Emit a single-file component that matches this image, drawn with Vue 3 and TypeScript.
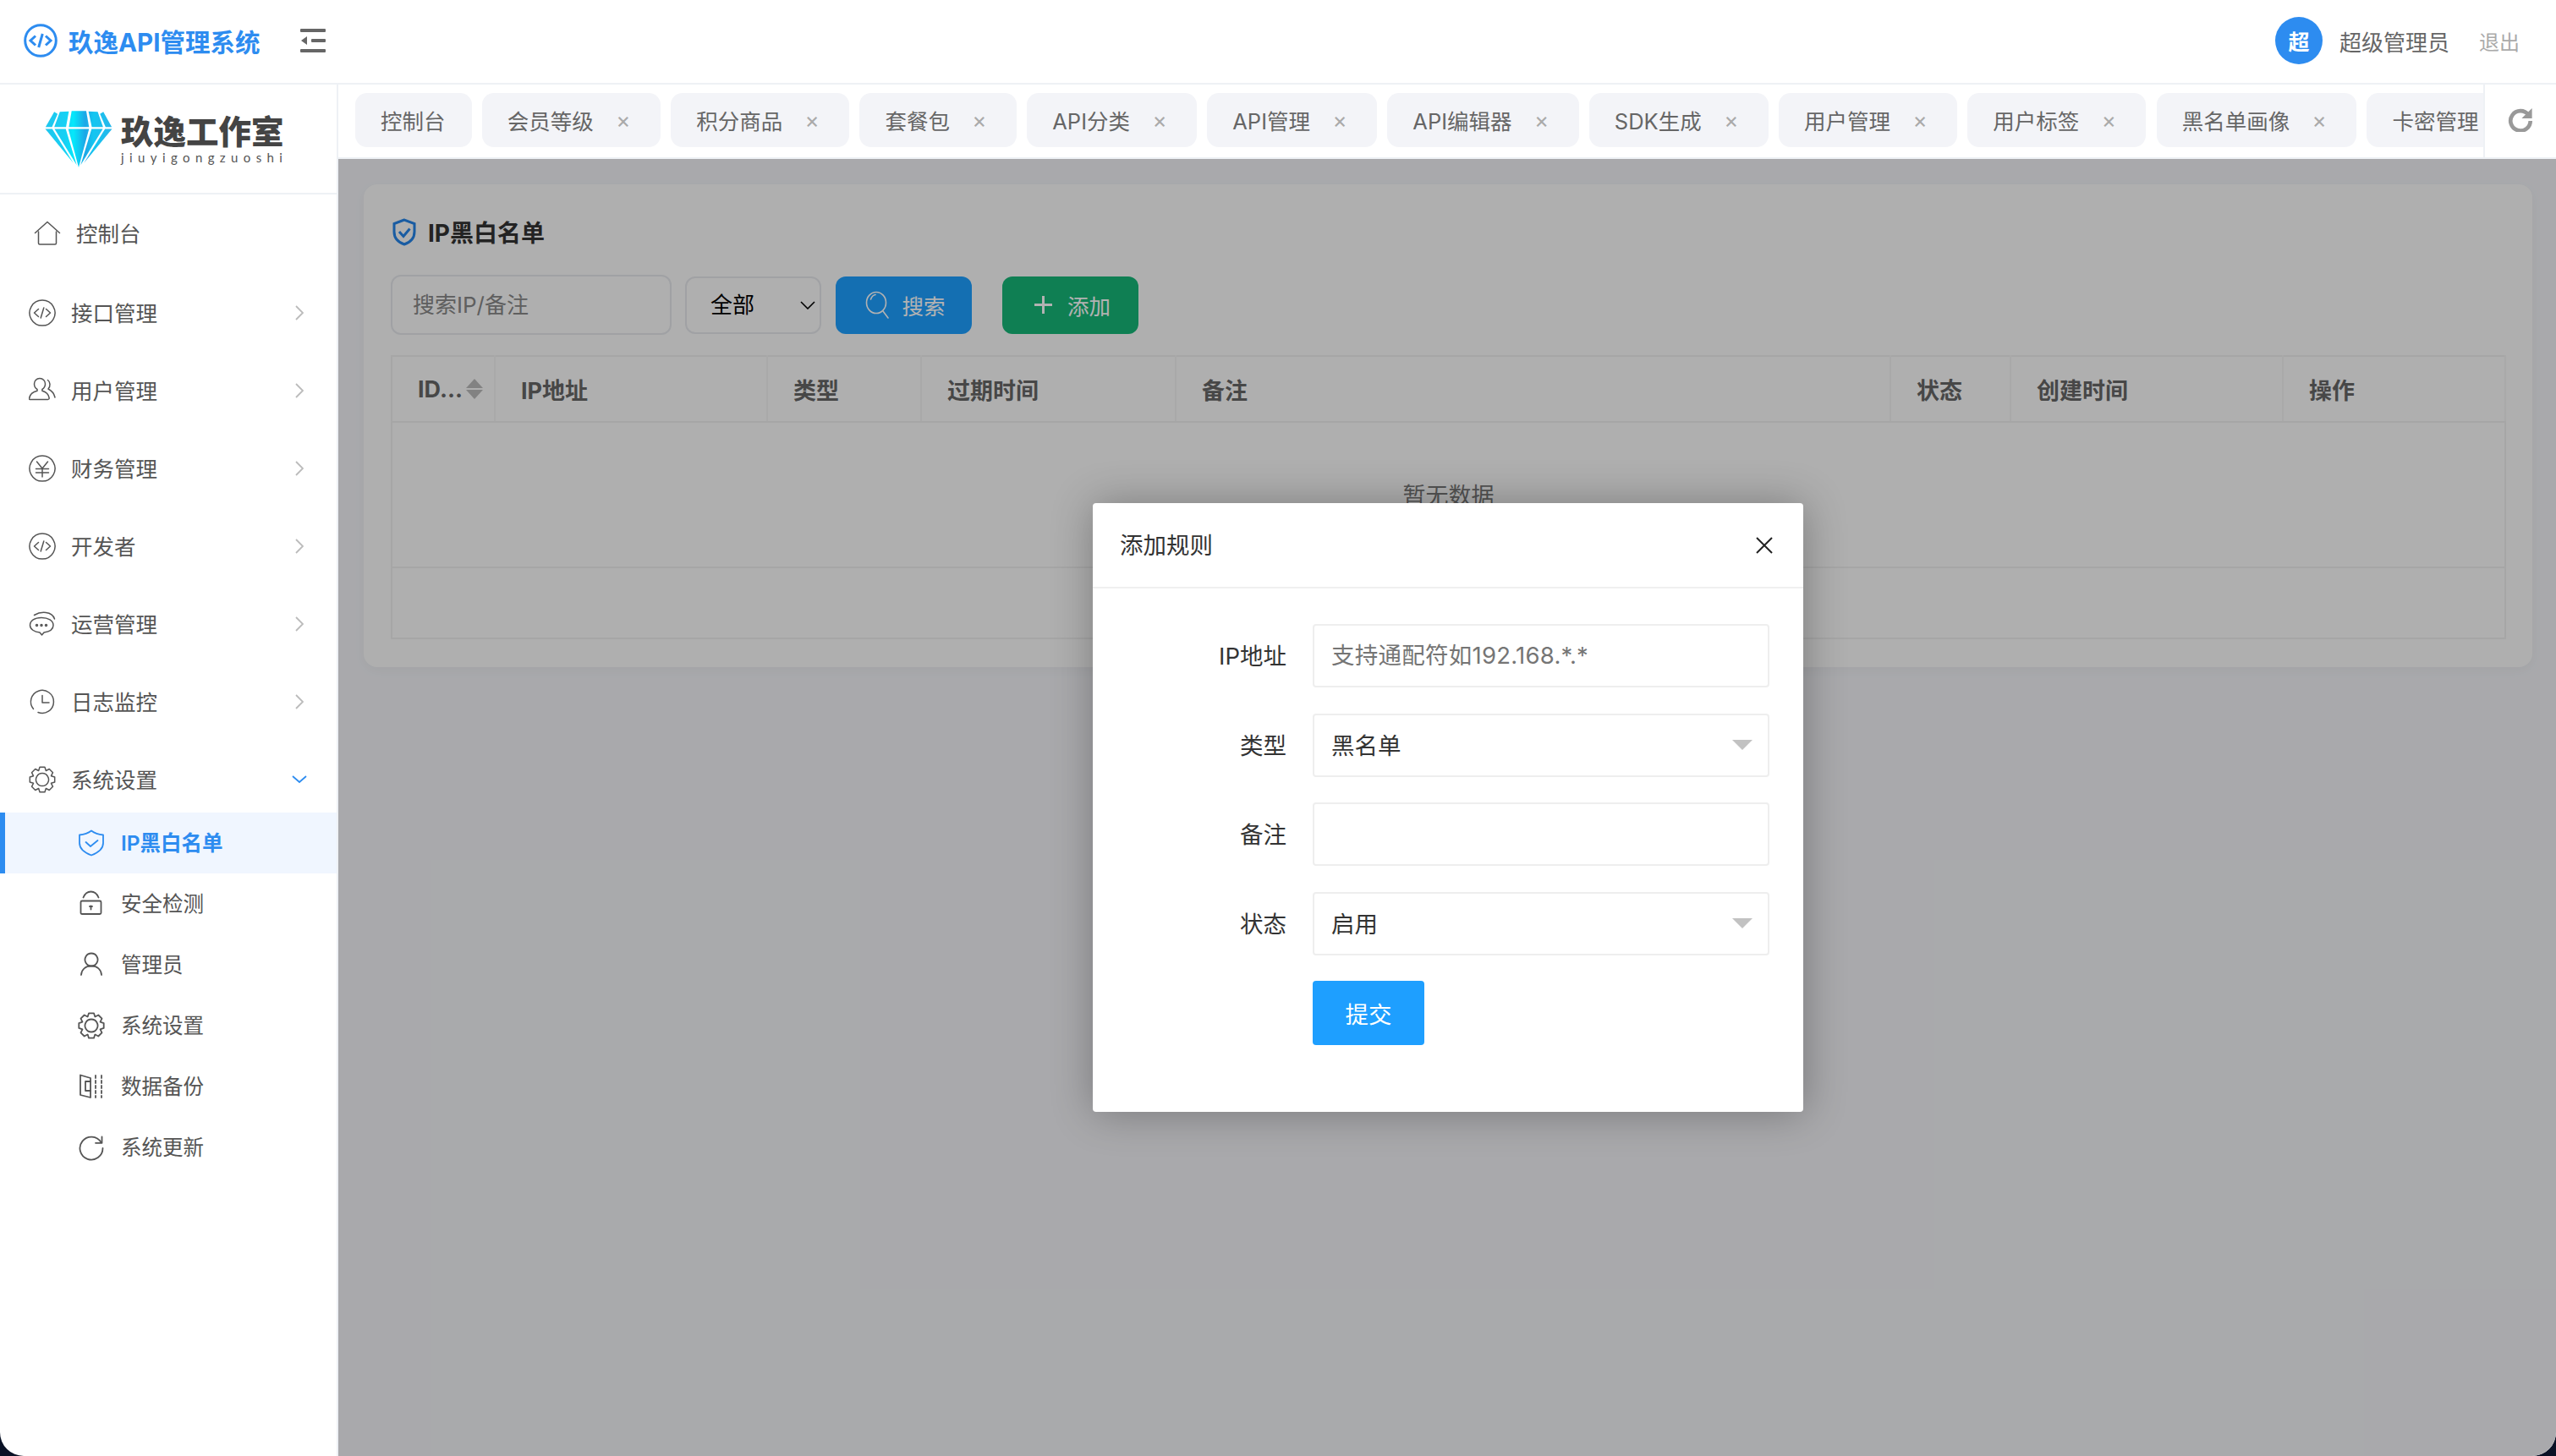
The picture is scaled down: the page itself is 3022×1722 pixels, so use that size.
<script setup lang="ts">
interface MenuItem {
  label: string
  icon: string
}

// 8 tooth gear used for the settings entries
const gearPath = (): string => {
  const pts: string[] = []
  for (let i = 0; i < 8; i++) {
    const a = (Math.PI / 4) * i - Math.PI / 2
    const step = [
      [-0.39, 11.4],
      [-0.2, 15],
      [0.2, 15],
      [0.39, 11.4],
    ]
    step.forEach(([d, r]) => {
      const x = 16 + r * Math.cos(a + d)
      const y = 16 + r * Math.sin(a + d)
      pts.push(`${x.toFixed(2)} ${y.toFixed(2)}`)
    })
  }
  return `M${pts.join('L')}Z`
}

const icons: Record<string, string[]> = {
  home: ['M1.5 14.5 16 1.5l14.5 13', 'M5.5 13v13.5q0 1.5 1.5 1.5h18q1.5 0 1.5-1.5V13'],
  code: ['M16 1a15 15 0 1 0 .01 0Z', 'M11.5 11.5 6.5 16l5 4.5', 'M20.5 11.5l5 4.5-5 4.5', 'M17.8 10l-3.6 12'],
  users: [
    'M13 1.5c4 0 6.5 3 6.5 6.6 0 3-1.6 5.2-3.6 6.4v1.8c3.8 1 7.4 3.6 8.2 8.2.2 1.2-.4 1.9-1.5 1.9H1.2c-.6 0-.8-.4-.7-1 .7-4.6 4.3-7.9 9.5-9.1v-1.8c-2.2-1.2-3.5-3.4-3.5-6.4 0-3.6 2.5-6.6 6.5-6.6Z',
    'M22.5 3.5c3 2 3.5 7.5.5 10.5 4 2 7 5.5 8 10',
  ],
  yen: ['M16 1a15 15 0 1 0 .01 0Z', 'M9.5 8 16 16l6.5-8', 'M16 16v10', 'M8.5 16.5h15', 'M8.5 21h15'],
  chat: [
    'M15 8.5C7 8.5 1.5 12 1.5 17.5c0 4.500 5 8 11.500 8.500L15.500 29 18 26C24.500 25 29 22 29 17.500 29 12 23 8.500 15 8.500Z',
    'M6.500 5.500C14 1 27.500.5 30.500 10',
    'M8.500 17.500a1 1 0 1 0 2 0a1 1 0 1 0-2 0Z',
    'M14 17.500a1 1 0 1 0 2 0a1 1 0 1 0-2 0Z',
    'M19.500 17.500a1 1 0 1 0 2 0a1 1 0 1 0-2 0Z',
  ],
  clock: ['M5.500 24.500A13.500 13.500 0 1 1 11 28.500', 'M16 8.500V17h8'],
  gear: [gearPath(), 'M16 8.500a7.500 7.500 0 1 0 .01 0Z'],
  shield: ['M16 1.500C12 4.500 7 6 2 6.500V16c0 6.500 6 11.500 14 14.500 8-3 14-8 14-14.500V6.500C25 6 20 4.500 16 1.500Z', 'M9.500 15l5.500 5 8.500-7'],
  lock: [
    'M5 12.500h21q1.500 0 1.500 1.500v12.500q0 1.500-1.500 1.500H5q-1.500 0-1.500-1.500V14q0-1.500 1.500-1.500Z',
    'M6.500 8.500C8.500 3.500 12 1.500 15.500 1.500s7 2 9 7',
    'M15.500 18.500v4',
    'M14 19h3',
  ],
  user: ['M16 2.500a7.500 7.500 0 1 0 .01 0Z', 'M4 28c.5-6.500 5-10.500 12-10.500S27.500 21.500 28 28'],
  backup: ['M3 2.500 15 6v23L3 26Z', 'M15 10H9v11h6', 'M21 3v3M21 9v3M21 15v3M21 21v3M21 27v2', 'M28 3v3M28 9v3M28 15v3M28 21v3M28 27v2'],
  refresh: ['M27.500 10A13.500 13.500 0 1 0 29.500 17', 'M28.500 3.500V10.800H21'],
}

const menus: MenuItem[] = [
  { label: '接口管理', icon: 'code' },
  { label: '用户管理', icon: 'users' },
  { label: '财务管理', icon: 'yen' },
  { label: '开发者', icon: 'code' },
  { label: '运营管理', icon: 'chat' },
  { label: '日志监控', icon: 'clock' },
]

const subMenus: MenuItem[] = [
  { label: 'IP黑白名单', icon: 'shield' },
  { label: '安全检测', icon: 'lock' },
  { label: '管理员', icon: 'user' },
  { label: '系统设置', icon: 'gear' },
  { label: '数据备份', icon: 'backup' },
  { label: '系统更新', icon: 'refresh' },
]

const tabs = ['会员等级', '积分商品', '套餐包', 'API分类', 'API管理', 'API编辑器', 'SDK生成', '用户管理', '用户标签', '黑名单画像']

const columns = [
  { label: 'IP地址', width: 322 },
  { label: '类型', width: 182 },
  { label: '过期时间', width: 301 },
  { label: '备注', width: 845 },
  { label: '状态', width: 142 },
  { label: '创建时间', width: 322 },
  { label: '操作', width: 263 },
]

const diamondFacets = [
  '1,58 32,4 44,11 24,58',
  '32,58 52,4 84,2 74,58',
  '84,58 94,1 146,1 156,58',
  '166,58 154,2 187,4 206,58',
  '215,58 195,11 207,4 237,58',
  '0,65 25,65 100,186',
  '33,65 73,65 112,194',
  '82,65 156,65 119,202',
  '165,65 205,65 126,194',
  '213,65 238,65 138,186',
]
</script>

<template>
  <div class="app">
    <header class="topbar">
      <svg class="brand-icon" viewBox="0 0 40 40">
        <circle cx="20" cy="20" r="18.300" />
        <path d="M14 14.500 8 20l6 5.500M26 14.500l6 5.500-6 5.500M22.300 12l-4.600 16" />
      </svg>
      <span class="brand-name">玖逸API管理系统</span>
      <svg class="fold-icon" viewBox="0 0 30 28">
        <rect x="0" y="0" width="30" height="4" rx="1" />
        <rect x="0" y="24" width="30" height="4" rx="1" />
        <rect x="13" y="12" width="17" height="4" rx="1" />
        <path d="M1 14 8 9v10Z" />
      </svg>
      <div class="topbar-right">
        <span class="avatar">超</span>
        <span class="username">超级管理员</span>
        <span class="logout">退出</span>
      </div>
    </header>

    <div class="body">
      <aside class="sidebar">
        <div class="logo">
          <svg class="diamond" viewBox="0 0 238 202">
            <defs>
              <linearGradient id="gem" x1="0" y1="0" x2="238" y2="0" gradientUnits="userSpaceOnUse">
                <stop offset="0" stop-color="#1fc6ee" />
                <stop offset="0.3" stop-color="#17d0f4" />
                <stop offset="0.42" stop-color="#04e8fb" />
                <stop offset="0.6" stop-color="#1da6e6" />
                <stop offset="0.72" stop-color="#13c6f1" />
                <stop offset="1" stop-color="#28b6ea" />
              </linearGradient>
            </defs>
            <polygon v-for="(p, i) in diamondFacets" :key="i" :points="p" fill="url(#gem)" />
          </svg>
          <div class="logo-text">
            <div class="logo-cn">玖逸工作室</div>
            <div class="logo-en">jiuyigongzuoshi</div>
          </div>
        </div>

        <nav class="menu">
          <a class="menu-item home">
            <svg class="menu-icon" viewBox="0 0 32 30"><path v-for="d in icons.home" :key="d" :d="d" /></svg>
            <span>控制台</span>
          </a>
          <a v-for="m in menus" :key="m.label" class="menu-item">
            <svg class="menu-icon" viewBox="0 0 32 32"><path v-for="d in icons[m.icon]" :key="d" :d="d" /></svg>
            <span>{{ m.label }}</span>
            <svg class="chevron" viewBox="0 0 10 18"><path d="M1 1l8 8-8 8" /></svg>
          </a>
          <a class="menu-item open">
            <svg class="menu-icon" viewBox="0 0 32 32"><path v-for="d in icons.gear" :key="d" :d="d" /></svg>
            <span>系统设置</span>
            <svg class="chevron-down" viewBox="0 0 18 10"><path d="M1 1l8 7 8-7" /></svg>
          </a>
          <a v-for="(s, i) in subMenus" :key="s.label" class="sub-item" :class="{ active: i === 0 }">
            <svg class="sub-icon" viewBox="0 0 32 32"><path v-for="d in icons[s.icon]" :key="d" :d="d" /></svg>
            <span>{{ s.label }}</span>
          </a>
        </nav>
      </aside>

      <main class="main">
        <div class="tabbar">
          <div class="tabs">
            <div class="tab">控制台</div>
            <div v-for="t in tabs" :key="t" class="tab closable">
              {{ t }}<span class="tab-close">×</span>
            </div>
            <div class="tab">卡密管理</div>
          </div>
          <div class="tab-refresh">
            <svg viewBox="0 0 32 32">
              <path d="M26 10.500A12.500 12.500 0 1 0 28.500 18" />
              <path class="arrow" d="M30.500 2v13H17.500Z" />
            </svg>
          </div>
        </div>

        <div class="content">
          <section class="card">
            <h2 class="card-title">
              <svg viewBox="0 0 28 33">
                <path d="M14 2 2 6.500V16c0 7.500 4.500 12.500 12 15 7.500-2.500 12-7.500 12-15V6.500Z" />
                <path d="M8 16l5 5.500 7.500-9" />
              </svg>
              IP黑白名单
            </h2>

            <div class="toolbar">
              <input class="search-input" type="text" placeholder="搜索IP/备注" />
              <div class="select-wrap">
                <select class="search-select">
                  <option>全部</option>
                  <option>黑名单</option>
                  <option>白名单</option>
                </select>
                <svg class="select-arrow" viewBox="0 0 18 10"><path d="M1 1l8 8 8-8" /></svg>
              </div>
              <button class="btn btn-blue" type="button">
                <svg class="btn-search" viewBox="0 0 29 34">
                  <ellipse cx="13" cy="14" rx="11.500" ry="12.500" />
                  <path d="M6.500 10c1-3 3-5 5.500-5.500M21 24l6 8" />
                </svg>
                搜索
              </button>
              <button class="btn btn-green" type="button">
                <svg class="btn-plus" viewBox="0 0 23 23"><path d="M11.500 1v21M1 11.500h21" /></svg>
                添加
              </button>
            </div>

            <table class="rules">
              <colgroup>
                <col style="width: 122px" />
                <col v-for="c in columns" :key="c.label" :style="{ width: c.width + 'px' }" />
              </colgroup>
              <thead>
                <tr>
                  <th>
                    <span class="id-head">
                      ID...
                      <svg class="sort" viewBox="0 0 20 24">
                        <path d="M10 0l10 11H0ZM0 13h20L10 24Z" />
                      </svg>
                    </span>
                  </th>
                  <th v-for="c in columns" :key="c.label">{{ c.label }}</th>
                </tr>
              </thead>
              <tbody>
                <tr class="empty-row">
                  <td colspan="8">暂无数据</td>
                </tr>
                <tr class="pager-row">
                  <td colspan="8"></td>
                </tr>
              </tbody>
            </table>
          </section>

          <div class="overlay">
            <div class="dialog">
              <div class="dialog-head">
                <span>添加规则</span>
                <svg viewBox="0 0 20 20"><path d="M1 1l18 18M19 1 1 19" /></svg>
              </div>
              <form class="dialog-form" @submit.prevent>
                <label class="form-label">IP地址</label>
                <input class="form-input" type="text" placeholder="支持通配符如192.168.*.*" />
                <label class="form-label">类型</label>
                <div class="form-select"><span>黑名单</span><i class="caret"></i></div>
                <label class="form-label">备注</label>
                <input class="form-input" type="text" />
                <label class="form-label">状态</label>
                <div class="form-select"><span>启用</span><i class="caret"></i></div>
                <div></div>
                <div><button class="submit" type="submit">提交</button></div>
              </form>
            </div>
          </div>
        </div>
      </main>
    </div>
  </div>
</template>

<style>
html,
body {
  margin: 0;
  background: #0a1226;
}
</style>

<style scoped>
.app {
  width: 3022px;
  height: 1722px;
  display: flex;
  flex-direction: column;
  overflow: hidden;
  background: #fff;
  border-radius: 0 0 28px 28px;
  font-family: Inter, "Noto Sans CJK SC", sans-serif;
  color: #555;
}

/* top bar */
.topbar {
  height: 100px;
  flex: none;
  box-sizing: border-box;
  display: flex;
  align-items: center;
  padding: 0 43px 2px 28px;
  border-bottom: 2px solid #eef1f5;
}
.brand-icon {
  width: 40px;
  height: 40px;
  fill: none;
  stroke: #2d8cf0;
  stroke-width: 3;
}
.brand-name {
  margin-left: 13px;
  font-size: 29.500px;
  font-weight: 700;
  color: #2d8cf0;
}
.fold-icon {
  width: 30px;
  height: 28px;
  margin-left: 48px;
  fill: #666;
}
.topbar-right {
  margin-left: auto;
  display: flex;
  align-items: center;
}
.avatar {
  width: 56px;
  height: 56px;
  border-radius: 50%;
  background: #2d8cf0;
  color: #fff;
  font-size: 25px;
  font-weight: 700;
  display: flex;
  align-items: center;
  justify-content: center;
}
.username {
  margin-left: 20px;
  font-size: 26px;
  color: #666;
}
.logout {
  margin-left: 35px;
  font-size: 24px;
  color: #aaa;
}

.body {
  flex: 1;
  display: flex;
  min-height: 0;
}

/* sidebar */
.sidebar {
  width: 400px;
  flex: none;
  box-sizing: border-box;
  border-right: 2px solid #eef1f5;
}
.logo {
  height: 130px;
  box-sizing: border-box;
  border-bottom: 2px solid #eef1f5;
  display: flex;
  align-items: center;
  padding-left: 53px;
}
.diamond {
  width: 80px;
  height: 67px;
}
.logo-text {
  margin-left: 10px;
  margin-top: 2px;
}
.logo-cn {
  font-size: 38.500px;
  line-height: 42px;
  font-weight: 900;
  color: #444;
  white-space: nowrap;
}
.logo-en {
  font-family: Lato, sans-serif;
  font-size: 15px;
  line-height: 18px;
  letter-spacing: 6.400px;
  color: #555;
  white-space: nowrap;
}
.menu {
  padding-top: 6px;
}
.menu-item {
  height: 78px;
  margin-bottom: 14px;
  padding-left: 34px;
  display: flex;
  align-items: center;
  font-size: 25.500px;
  color: #555;
}
.menu-item span,
.sub-item span {
  padding-bottom: 3px;
}
.menu-item.home {
  padding-left: 40px;
  margin-top: 1px;
  margin-bottom: 16px;
}
.menu-item.open {
  margin-bottom: 0;
}
.menu-icon {
  width: 32px;
  height: 32px;
  margin-right: 18px;
  fill: none;
  stroke: #555;
  stroke-width: 1.500;
  stroke-linejoin: round;
  stroke-linecap: round;
}
.chevron {
  width: 10px;
  height: 18px;
  margin-left: auto;
  margin-right: 39px;
  fill: none;
  stroke: #bbb;
  stroke-width: 1.800;
}
.chevron-down {
  width: 18px;
  height: 10px;
  margin-left: auto;
  margin-right: 35px;
  fill: none;
  stroke: #2d8cf0;
  stroke-width: 1.800;
}
.sub-item {
  height: 72px;
  padding-left: 92px;
  display: flex;
  align-items: center;
  font-size: 24.500px;
  color: #555;
}
.sub-icon {
  width: 32px;
  height: 32px;
  margin-right: 19px;
  fill: none;
  stroke: #555;
  stroke-width: 1.800;
  stroke-linejoin: round;
  stroke-linecap: round;
}
.sub-item.active {
  background: #f0f6ff;
  box-shadow: inset 6px 0 0 #2d8cf0;
  color: #2d8cf0;
  font-weight: 600;
}
.sub-item.active .sub-icon {
  stroke: #2d8cf0;
}

/* tab strip */
.main {
  flex: 1;
  min-width: 0;
  display: flex;
  flex-direction: column;
}
.tabbar {
  height: 88px;
  flex: none;
  box-sizing: border-box;
  display: flex;
  border-bottom: 2px solid #eef1f5;
}
.tabs {
  flex: 1;
  min-width: 0;
  display: flex;
  align-items: center;
  gap: 12.300px;
  padding-left: 20px;
  padding-bottom: 3px;
  overflow: hidden;
}
.tab {
  flex: none;
  height: 64px;
  box-sizing: border-box;
  padding: 0 31px 0 30px;
  display: flex;
  align-items: center;
  border-radius: 14px;
  background: #f3f4f8;
  font-size: 25.500px;
  color: #666;
  white-space: nowrap;
}
.tab.closable {
  padding-right: 35px;
}
.tab-close {
  width: 18px;
  margin-left: 26px;
  text-align: center;
  font-size: 26px;
  color: #aaa;
}
.tab-refresh {
  width: 86px;
  flex: none;
  box-sizing: border-box;
  border-left: 2px solid #eef1f5;
  display: flex;
  align-items: center;
  justify-content: center;
}
.tab-refresh svg {
  width: 30px;
  height: 30px;
  margin-bottom: 4px;
  fill: none;
  stroke: #999;
  stroke-width: 5;
}
.tab-refresh .arrow {
  fill: #999;
  stroke: none;
}

/* page */
.content {
  flex: 1;
  position: relative;
  box-sizing: border-box;
  padding: 30px 28px 0 30px;
  background: #f2f3f7;
}
.card {
  padding: 32px 33px 33px 32px;
  border-radius: 16px;
  background: #fbfbfb;
  box-shadow: 0 4px 14px rgba(0, 0, 0, 0.04);
}
.card-title {
  margin: 0 0 27px;
  padding-left: 2px;
  height: 48px;
  display: flex;
  align-items: center;
  gap: 14px;
  font-size: 28px;
  font-weight: 700;
  color: #333;
}
.card-title svg {
  width: 28px;
  height: 33px;
  fill: none;
  stroke: #2484e8;
  stroke-width: 3;
}
.toolbar {
  display: flex;
  align-items: center;
  margin-bottom: 24px;
}
.search-input {
  width: 332px;
  height: 71px;
  box-sizing: border-box;
  padding: 0 24px;
  border: 2px solid #e5e7eb;
  border-radius: 12px;
  background: transparent;
  font: inherit;
  font-size: 26px;
  outline: none;
}
.search-input::placeholder {
  color: #888;
}
.select-wrap {
  position: relative;
  margin-left: 16px;
}
.search-select {
  display: block;
  width: 161px;
  height: 68px;
  box-sizing: border-box;
  padding: 0 28px;
  border: 2px solid #e5e7eb;
  border-radius: 12px;
  background: transparent;
  appearance: none;
  font: inherit;
  font-size: 26px;
  color: #000;
  outline: none;
}
.select-arrow {
  position: absolute;
  top: 29px;
  right: 7px;
  width: 18px;
  height: 10px;
  fill: none;
  stroke: #000;
  stroke-width: 1.600;
  pointer-events: none;
}
.btn {
  width: 161px;
  height: 68px;
  padding: 0 0 0 4px;
  border: 0;
  border-radius: 12px;
  display: flex;
  align-items: center;
  justify-content: center;
  font: inherit;
  font-size: 25.500px;
  color: #fff;
}
.btn-blue {
  margin-left: 17px;
  gap: 14px;
  background: #1e9fff;
}
.btn-green {
  margin-left: 36px;
  gap: 17px;
  background: #16b777;
}
.btn-search {
  width: 29px;
  height: 34px;
  fill: none;
  stroke: #fff;
  stroke-width: 1.600;
  stroke-linecap: round;
}
.btn-plus {
  width: 23px;
  height: 23px;
  fill: none;
  stroke: #fff;
  stroke-width: 3;
}
.rules {
  width: 100%;
  table-layout: fixed;
  border-collapse: collapse;
  border: 2px solid #eee;
}
.rules th {
  box-sizing: border-box;
  height: 78px;
  padding: 0 30px;
  border-right: 2px solid #f2f2f2;
  border-bottom: 2px solid #eee;
  text-align: left;
  font-size: 27px;
  font-weight: 700;
  color: #666;
  white-space: nowrap;
}
.rules th:first-child {
  padding: 0 10px 0 30px;
}
.id-head {
  display: flex;
  align-items: center;
  gap: 4px;
}
.sort {
  width: 20px;
  height: 24px;
  fill: #bbb;
}
.empty-row td {
  box-sizing: border-box;
  height: 172px;
  padding-bottom: 3px;
  border-bottom: 2px solid #eee;
  text-align: center;
  font-size: 27px;
  color: #777;
}
.pager-row td {
  box-sizing: border-box;
  height: 84px;
}

/* dialog */
.overlay {
  position: absolute;
  inset: 0;
  padding-left: 2px;
  display: flex;
  align-items: center;
  justify-content: center;
  background: rgba(0, 0, 0, 0.3);
}
.dialog {
  width: 840px;
  height: 720px;
  background: #fff;
  border-radius: 4px;
  box-shadow: 1px 1px 50px rgba(0, 0, 0, 0.3);
}
.dialog-head {
  height: 101px;
  box-sizing: border-box;
  padding: 0 36px 0 32px;
  border-bottom: 2px solid #f0f0f0;
  display: flex;
  align-items: center;
  justify-content: space-between;
  font-size: 27.500px;
  color: #333;
}
.dialog-head span {
  padding-bottom: 3px;
}
.dialog-head svg {
  width: 20px;
  height: 20px;
  fill: none;
  stroke: #222;
  stroke-width: 2;
}
.dialog-form {
  display: grid;
  grid-template-columns: 229px 540px;
  column-gap: 31px;
  row-gap: 30.500px;
  padding-top: 42px;
  align-items: center;
}
.form-label {
  padding-bottom: 3px;
  text-align: right;
  font-size: 27.500px;
  color: #333;
}
.form-input,
.form-select {
  height: 75px;
  box-sizing: border-box;
  padding: 0 18px 0 20px;
  border: 2px solid #eee;
  border-radius: 4px;
  font: inherit;
  font-size: 27.500px;
  color: #333;
  outline: none;
}
.form-input {
  padding-bottom: 2px;
}
.form-input::placeholder {
  color: #757575;
  letter-spacing: 0.250px;
}
.form-select {
  display: flex;
  align-items: center;
  justify-content: space-between;
}
.form-select span {
  padding-bottom: 3px;
}
.caret {
  width: 0;
  height: 0;
  border-left: 12px solid transparent;
  border-right: 12px solid transparent;
  border-top: 12px solid #c2c2c2;
}
.submit {
  width: 132px;
  height: 76px;
  display: block;
  border: 0;
  border-radius: 4px;
  background: #1e9fff;
  font: inherit;
  font-size: 27.500px;
  color: #fff;
}
</style>
